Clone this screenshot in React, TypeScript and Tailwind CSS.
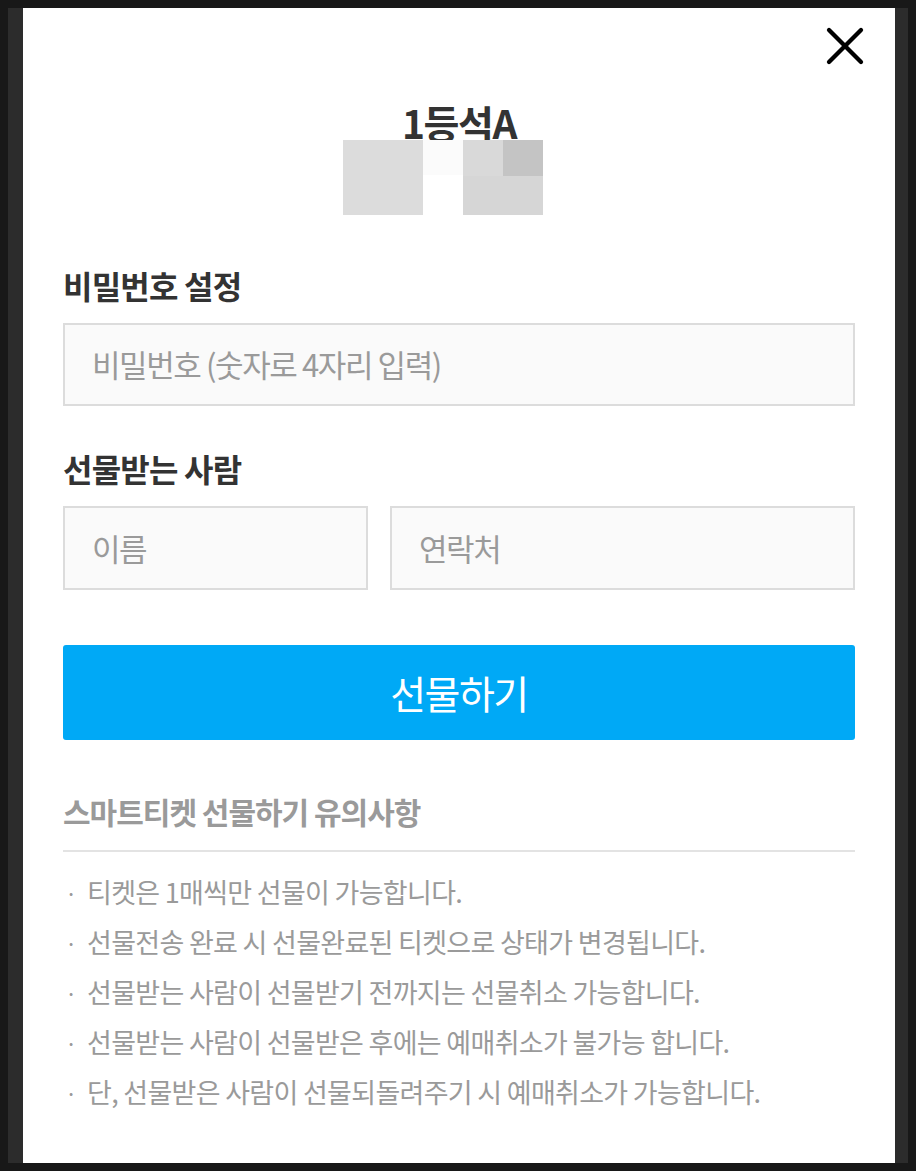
import { X } from 'lucide-react'

const NOTICES = [
  '티켓은 1매씩만 선물이 가능합니다.',
  '선물전송 완료 시 선물완료된 티켓으로 상태가 변경됩니다.',
  '선물받는 사람이 선물받기 전까지는 선물취소 가능합니다.',
  '선물받는 사람이 선물받은 후에는 예매취소가 불가능 합니다.',
  '단, 선물받은 사람이 선물되돌려주기 시 예매취소가 가능합니다.',
]

const font = { fontFamily: '"Noto Sans CJK KR", "Noto Sans", sans-serif' }

export default function App() {
  return (
    <div className="h-[1171px] bg-[#181818] pt-2 px-2" style={font}>
      <div className="h-[1155px] bg-[#2c2c2c] pl-[15px] pr-[13px]">
        <div className="relative h-full bg-white px-10">
          <button className="absolute right-[18px] top-[6px] text-black">
            <X size={64} strokeWidth={1.6} />
          </button>

          <div className="pt-[94px] flex flex-col items-center">
            <h1 className="text-[39px] leading-[40px] font-bold text-[#333] tracking-[-1.5px]">1등석A</h1>
            <div className="flex h-[75px] -mt-[2px] mr-[32px]">
              <div className="w-[80px] bg-[#dcdcdc]" />
              <div className="w-[40px] flex flex-col">
                <div className="h-[35px] bg-[#fbfbfb]" />
              </div>
              <div className="w-[80px] grid grid-cols-2 grid-rows-[36px_1fr]">
                <div className="bg-[#d9d9d9]" />
                <div className="bg-[#c4c4c4]" />
                <div className="col-span-2 bg-[#d6d6d6]" />
              </div>
            </div>
          </div>

          <h2 className="mt-[52px] text-[32px] leading-[36px] font-bold text-[#333] tracking-[-0.8px]">비밀번호 설정</h2>
          <div className="mt-[20px] h-[83px] border-2 border-[#dcdcdc] bg-[#fafafa] flex items-center px-[27px]">
            <span className="text-[31px] text-[#9a9a9a] tracking-[-1.4px]">비밀번호 (숫자로 4자리 입력)</span>
          </div>

          <h2 className="mt-[44px] text-[32px] leading-[36px] font-bold text-[#333] tracking-[-0.8px]">선물받는 사람</h2>
          <div className="mt-[20px] flex gap-[22px]">
            <div className="w-[305px] h-[84px] border-2 border-[#dcdcdc] bg-[#fafafa] flex items-center px-[27px]">
              <span className="text-[31px] text-[#9a9a9a] tracking-[-1.4px]">이름</span>
            </div>
            <div className="flex-1 h-[84px] border-2 border-[#dcdcdc] bg-[#fafafa] flex items-center px-[27px]">
              <span className="text-[31px] text-[#9a9a9a] tracking-[-1.4px]">연락처</span>
            </div>
          </div>

          <button className="mt-[55px] w-full h-[95px] rounded-[3px] bg-[#00a9f6] text-white text-[39px] tracking-[-1.5px] flex items-center justify-center">
            선물하기
          </button>

          <h3 className="mt-[53px] text-[30px] leading-[36px] font-bold text-[#9a9a9a] tracking-[-1px]">스마트티켓 선물하기 유의사항</h3>
          <div className="mt-[21px] h-[2px] bg-[#e3e3e3]" />

          <ul className="mt-[15px] flex flex-col">
            {NOTICES.map((n) => (
              <li key={n} className="flex h-[50px] items-center text-[27px] text-[#9a9a9a] tracking-[-0.7px]">
                <span className="w-[24px] pl-[2px] text-[22px]">·</span>
                <span>{n}</span>
              </li>
            ))}
          </ul>
        </div>
      </div>
    </div>
  )
}
